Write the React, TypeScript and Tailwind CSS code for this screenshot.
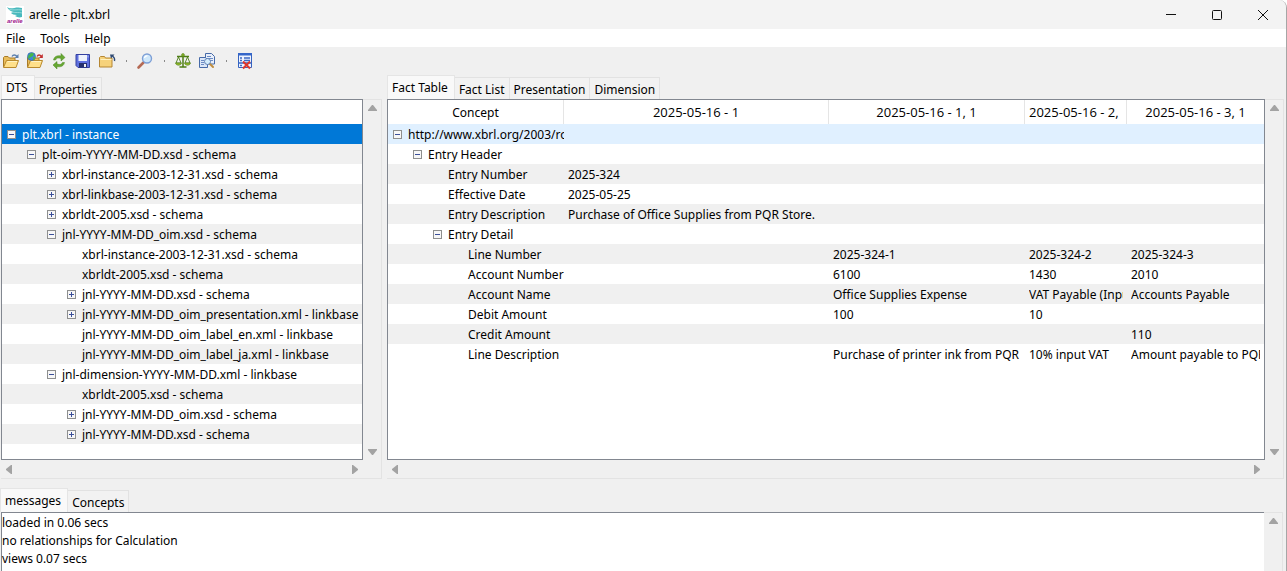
import { Fragment, useState, type ReactNode } from "react";

type Expander = "open" | "closed" | "none";
type TreeItem = { level: number; state: Expander; label: string };
type FactRow = { level: number; state: Expander; label: string; values?: string[] };

const dtsItems: TreeItem[] = [
  { level: 0, state: "open", label: "plt.xbrl - instance" },
  { level: 1, state: "open", label: "plt-oim-YYYY-MM-DD.xsd - schema" },
  { level: 2, state: "closed", label: "xbrl-instance-2003-12-31.xsd - schema" },
  { level: 2, state: "closed", label: "xbrl-linkbase-2003-12-31.xsd - schema" },
  { level: 2, state: "closed", label: "xbrldt-2005.xsd - schema" },
  { level: 2, state: "open", label: "jnl-YYYY-MM-DD_oim.xsd - schema" },
  { level: 3, state: "none", label: "xbrl-instance-2003-12-31.xsd - schema" },
  { level: 3, state: "none", label: "xbrldt-2005.xsd - schema" },
  { level: 3, state: "closed", label: "jnl-YYYY-MM-DD.xsd - schema" },
  { level: 3, state: "closed", label: "jnl-YYYY-MM-DD_oim_presentation.xml - linkbase" },
  { level: 3, state: "none", label: "jnl-YYYY-MM-DD_oim_label_en.xml - linkbase" },
  { level: 3, state: "none", label: "jnl-YYYY-MM-DD_oim_label_ja.xml - linkbase" },
  { level: 2, state: "open", label: "jnl-dimension-YYYY-MM-DD.xml - linkbase" },
  { level: 3, state: "none", label: "xbrldt-2005.xsd - schema" },
  { level: 3, state: "closed", label: "jnl-YYYY-MM-DD_oim.xsd - schema" },
  { level: 3, state: "closed", label: "jnl-YYYY-MM-DD.xsd - schema" },
];

const factColumns = ["2025-05-16 - 1", "2025-05-16 - 1, 1", "2025-05-16 - 2, 1", "2025-05-16 - 3, 1"];

const factRows: FactRow[] = [
  { level: 0, state: "open", label: "http://www.xbrl.org/2003/role" },
  { level: 1, state: "open", label: "Entry Header" },
  { level: 2, state: "none", label: "Entry Number", values: ["2025-324"] },
  { level: 2, state: "none", label: "Effective Date", values: ["2025-05-25"] },
  { level: 2, state: "none", label: "Entry Description", values: ["Purchase of Office Supplies from PQR Store."] },
  { level: 2, state: "open", label: "Entry Detail" },
  { level: 3, state: "none", label: "Line Number", values: ["", "2025-324-1", "2025-324-2", "2025-324-3"] },
  { level: 3, state: "none", label: "Account Number", values: ["", "6100", "1430", "2010"] },
  { level: 3, state: "none", label: "Account Name", values: ["", "Office Supplies Expense", "VAT Payable (Input)", "Accounts Payable"] },
  { level: 3, state: "none", label: "Debit Amount", values: ["", "100", "10"] },
  { level: 3, state: "none", label: "Credit Amount", values: ["", "", "", "110"] },
  { level: 3, state: "none", label: "Line Description", values: ["", "Purchase of printer ink from PQR", "10% input VAT", "Amount payable to PQR"] },
];

const messages = ["loaded in 0.06 secs", "no relationships for Calculation", "views 0.07 secs"];

const indents = ["pl-[5px]", "pl-[25px]", "pl-[45px]", "pl-[65px]"];

function ExpanderBox({ state }: { state: Expander }) {
  if (state === "none") return <span className="w-[15px] shrink-0" />;
  return (
    <svg viewBox="0 0 9 9" className="mr-1.5 size-[9px] shrink-0" shapeRendering="crispEdges" aria-hidden="true">
      <rect x="0.5" y="0.5" width="8" height="8" fill="#f7f7f7" stroke="#8e8f8f" />
      <path d="M2 4.5h5" stroke="#3b4f9a" />
      {state === "closed" && <path d="M4.5 2v5" stroke="#3b4f9a" />}
    </svg>
  );
}

function Tabs({ label, names }: { label: string; names: string[] }) {
  const [active, setActive] = useState(names[0]);
  return (
    <div role="tablist" aria-label={label} className="flex h-6 items-end">
      {names.map((name) => (
        <button
          key={name}
          role="tab"
          aria-selected={name === active}
          onClick={() => setActive(name)}
          className={
            name === active
              ? "h-6 border border-b-0 border-[#e5e5e5] bg-[#f9f9f9] pr-1.5 pl-1"
              : "h-[22px] border border-b-0 border-l-0 border-[#e2e2e2] bg-[#f2f2f2] px-1 pt-0.5"
          }
        >
          {name}
        </button>
      ))}
    </div>
  );
}

const arrowPaths = {
  up: "M4 0h1l4 5v1H0V5z",
  down: "M0 0h9v1L5 6H4L0 1z",
  left: "M7 0v9H6L1 5V4l5-4z",
  right: "M1 0h1l5 4v1L2 9H1z",
};

function Arrow({ dir }: { dir: "up" | "down" | "left" | "right" }) {
  return (
    <button aria-label={"Scroll " + dir} className="flex size-4 items-center justify-center">
      <svg viewBox={dir === "up" || dir === "down" ? "0 0 9 6" : "0 0 8 9"} className={dir === "up" || dir === "down" ? "h-1.5 w-[9px]" : "h-[9px] w-2"} aria-hidden="true">
        <path d={arrowPaths[dir]} fill="#a3a3a3" />
      </svg>
    </button>
  );
}

/* A bordered view with its two scroll bars along the right and bottom edges. */
function ScrollView({ children }: { children: ReactNode }) {
  return (
    <div className="grid flex-1 grid-cols-[minmax(0,1fr)_18px] grid-rows-[1fr_18px] border-r border-b border-[#e3e3e3]">
      <div className="overflow-hidden border border-[#828790] bg-white pb-[15px]">{children}</div>
      <div className="flex flex-col items-center justify-between border-t border-[#e3e3e3]">
        <Arrow dir="up" />
        <Arrow dir="down" />
      </div>
      <div className="flex items-center justify-between">
        <Arrow dir="left" />
        <Arrow dir="right" />
      </div>
    </div>
  );
}

function Folder() {
  return (
    <>
      <path d="M.5 14V4.500l1-1h3.500l1.500 1.500h5.500v3" fill="#e9bd5b" stroke="#a87a26" />
      <path d="M.500 14.500 3.500 7.500h12L13 14.500z" fill="#ffe08a" stroke="#b98a2e" />
      <path d="M4.500 8.500h9.500" stroke="#fff3c4" />
    </>
  );
}

const icons: Record<string, ReactNode> = {
  "Open file": (
    <>
      <Folder />
      <path d="M9 3.500c1-2 3.500-2 5 0" fill="none" stroke="#5b7fae" strokeWidth="1.300" />
      <path d="M15.500 1v4h-4z" fill="#5b7fae" />
    </>
  ),
  "Open from web": (
    <>
      <Folder />
      <circle cx="4.500" cy="3.500" r="4" fill="#3f86d8" stroke="#2d5f9f" strokeWidth="0.600" />
      <path d="M1 3 4 0l3 .5L6 3l-2 1L1.500 6zM6 4l2-.5L8 6 6 7z" fill="#45b749" />
      <path d="M10 3.500c1-2 3-2 4.500 0" fill="none" stroke="#c22f2f" strokeWidth="1.300" />
      <path d="M15.800 1v4h-4z" fill="#c22f2f" />
    </>
  ),
  Reload: (
    <>
      <path d="M2.500 7c.5-3.500 4-5 7.500-4V.5L14 4.500 10 8V5.500C7 4.500 5.500 5 4.500 7z" fill="#67a833" stroke="#4a8720" strokeWidth="0.500" />
      <path d="M13.500 9.500c-.5 3.500-4 5-7.500 4V16l-4-4 4-3.500V11c3 1 4.500.5 5.500-1.500z" fill="#67a833" stroke="#4a8720" strokeWidth="0.500" />
    </>
  ),
  Save: (
    <>
      <path d="M1 1.500h13.500v13H3l-2-2z" fill="#5f70de" stroke="#3440a0" />
      <path d="M3.500 2h8.500v6H3.500z" fill="#eef2fc" />
      <path d="M4 10h8v4.500H4z" fill="#26306e" />
      <path d="M9 11h2v3H9z" fill="#f0f0f0" />
      <path d="M12.500 2.500h1v2h-1z" fill="#a9b6f5" />
    </>
  ),
  "Save as": (
    <>
      <path d="M.5 14V4.500l1-1h4l1 1.500h6.500v9z" fill="#f6d27b" stroke="#b58633" />
      <path d="M1.500 6.500h11" stroke="#fff0bd" />
      <path d="M15.500 8c.5-2 0-3.500-2-5" fill="none" stroke="#2f4a73" strokeWidth="1.300" />
      <path d="M11 1.500h4.500L12 5.500z" fill="#2f4a73" />
    </>
  ),
  Find: (
    <>
      <path d="m1.500 14.500 5-5" stroke="#b56a54" strokeWidth="2.600" strokeLinecap="round" />
      <circle cx="10" cy="5.500" r="4.500" fill="#cfe8fb" stroke="#7d9fd6" strokeWidth="1.400" />
      <path d="M7.500 5c.3-1.500 1.500-2.300 3-2.200" fill="none" stroke="#fff" strokeWidth="1.200" />
    </>
  ),
  Validate: (
    <>
      <path d="M8 2v11.500M2 3.500h12M4.500 14h7" stroke="#4d7d16" strokeWidth="1.500" />
      <circle cx="8" cy="2" r="1.400" fill="#8db528" stroke="#4d7d16" strokeWidth="0.600" />
      <path d="M3.500 4 1 10h5zM12.500 4 10 10h5z" fill="none" stroke="#4d7d16" strokeWidth="0.900" />
      <path d="M.5 10h6c-.5 3-5.500 3-6 0zM9.500 10h6c-.5 3-5.500 3-6 0z" fill="#95bb2b" stroke="#4d7d16" strokeWidth="0.600" />
    </>
  ),
  "Compare DTS": (
    <>
      <path d="M6.500.5h6l3 3V11h-9z" fill="#e9effa" stroke="#466aa8" />
      <path d="M8 3.500h4M8 5.500h6M11 7.500h3" stroke="#6c8cc4" />
      <path d="M.5 4.500h6l2 2v8h-8z" fill="#dce7f8" stroke="#466aa8" />
      <path d="M2 7.500h3M2 9.500h3M2 11.500h3" stroke="#6c8cc4" />
      <path d="m11 11 3 3" stroke="#c08d3e" strokeWidth="2" strokeLinecap="round" />
      <circle cx="8.500" cy="8.500" r="3" fill="#d5edfc" stroke="#5e80b5" />
    </>
  ),
  "Close table": (
    <>
      <path d="M1.500.5h13v14h-13z" fill="#eef3ff" stroke="#3563bf" />
      <path d="M1 0h14v2.500H1z" fill="#3566c9" />
      <path d="M3 5h2M7 5h6M3 7.500h2M7 7.500h6M3 12.500h2" stroke="#3e6ac4" strokeWidth="1.300" />
      <path d="M1 10h14" stroke="#3566c9" strokeWidth="1.500" />
      <path d="m6 8.500 7 7M13 8.500l-7 7" stroke="#e0372a" strokeWidth="2" />
    </>
  ),
};

const toolGroups = [["Open file", "Open from web", "Reload", "Save", "Save as"], ["Find"], ["Validate", "Compare DTS"], ["Close table"]];

export default function App() {
  return (
    <div className="flex min-h-screen flex-col overflow-hidden rounded-tr-lg border-r border-[#a6a6a6] bg-[#f0f0f0] font-['Noto_Sans','Open_Sans',sans-serif] text-xs text-black">
      <header className="flex h-[29px] items-center bg-[#f3f3f3] pl-1.5">
        <svg viewBox="0 0 18 18" className="mr-[5px] size-[18px]" aria-hidden="true">
          <path d="M0 0h18v18H0z" fill="#fff" />
          <path d="M1 1c4 3 9-1 15 1v9c-3 1-5 0-7-1l2-1c-3 0-5-1-6-2l2-1C4 5 2 3 1 1z" fill="#49b9bd" />
          <path d="M3 3c4 2 8 0 13 1M6 6c4 1 7 0 10 1" stroke="#a5dfe0" strokeWidth="0.800" fill="none" />
          <text x="1" y="17" fontSize="6" fontWeight="700" fontStyle="italic" fill="#a0188c" fontFamily="Liberation Sans">arelle</text>
        </svg>
        <h1>arelle - plt.xbrl</h1>
        <div className="ml-auto flex">
          <button aria-label="Minimize" className="flex h-7 w-[46px] items-center justify-center">
            <svg viewBox="0 0 10 10" className="size-2.5"><path d="M0 4.500h10" stroke="#111" /></svg>
          </button>
          <button aria-label="Maximize" className="flex h-7 w-[46px] items-center justify-center">
            <svg viewBox="0 0 10 10" className="size-2.5"><rect x="0.500" y="0.500" width="9" height="9" rx="1" fill="none" stroke="#111" /></svg>
          </button>
          <button aria-label="Close" className="flex h-7 w-[46px] items-center justify-center">
            <svg viewBox="0 0 10 10" className="size-2.5"><path d="m0 0 10 10M10 0 0 10" stroke="#111" /></svg>
          </button>
        </div>
      </header>

      <nav aria-label="Menu" className="flex h-[18px] items-center gap-[15px] bg-white px-1.5 pt-0.5">
        <button>File</button>
        <button>Tools</button>
        <button>Help</button>
      </nav>

      <div role="toolbar" aria-label="Tools" className="flex h-7 items-center gap-0.5">
        {toolGroups.map((group, i) => (
          <Fragment key={i}>
            {i > 0 && (
              <span className="flex w-3 justify-center">
                <span className="h-0.5 w-px bg-[#8a8a8a]" />
              </span>
            )}
            {group.map((name) => (
              <button key={name} aria-label={name} title={name} className="flex h-6 w-[22px] items-center justify-center">
                <svg viewBox="0 0 16 16" className="size-4 overflow-visible">{icons[name]}</svg>
              </button>
            ))}
          </Fragment>
        ))}
      </div>

      <main className="flex gap-[5px] pr-0.5">
        <section aria-label="DTS" className="flex w-[382px] shrink-0 flex-col pl-px">
          <Tabs label="DTS views" names={["DTS", "Properties"]} />
          <ScrollView>
            <div className="h-6" />
            <ul role="tree" aria-label="DTS">
              {dtsItems.map((item, i) => (
                <li
                  key={i}
                  role="treeitem"
                  aria-level={item.level + 1}
                  aria-selected={i === 0}
                  className={
                    "flex h-5 items-center whitespace-nowrap " +
                    indents[item.level] +
                    (i === 0 ? " bg-[#0078d7] text-white" : i % 2 === 1 ? " bg-[#f0f0f0]" : "")
                  }
                >
                  <ExpanderBox state={item.state} />
                  <span className="pt-0.5">{item.label}</span>
                </li>
              ))}
            </ul>
          </ScrollView>
        </section>

        <section aria-label="Fact Table" className="flex min-w-0 flex-1 flex-col">
          <Tabs label="Fact views" names={["Fact Table", "Fact List", "Presentation", "Dimension"]} />
          <ScrollView>
            <table className="w-full table-fixed border-separate border-spacing-0">
              <colgroup>
                <col className="w-[176px]" />
                <col />
                <col className="w-[196px]" />
                <col className="w-[102px]" />
                <col className="w-[137px]" />
              </colgroup>
              <thead>
                <tr className="h-6">
                  <th className="border-r border-[#e5e5e5] p-0 pt-0.5 font-normal">Concept</th>
                  {factColumns.map((name) => (
                    <th key={name} className="border-r border-[#e5e5e5] p-0 px-1 font-['Open_Sans','Noto_Sans',sans-serif] text-[13px] leading-4 font-normal whitespace-nowrap last:border-r-0">
                      <div className="overflow-hidden">{name}</div>
                    </th>
                  ))}
                </tr>
              </thead>
              <tbody>
                {factRows.map((row, i) => (
                  <tr key={row.label} className={i === 0 ? "h-5 bg-[#e0f0ff]" : i % 2 === 0 ? "h-5 bg-[#f0f0f0]" : "h-5"}>
                    <th scope="row" className="p-0 text-left font-normal">
                      <div className={"flex h-5 items-center overflow-hidden whitespace-nowrap " + indents[row.level]}>
                        <ExpanderBox state={row.state} />
                        <span className="pt-0.5">{row.label}</span>
                      </div>
                    </th>
                    {factColumns.map((name, c) => (
                      <td key={name} className="p-0 px-1">
                        <div className="overflow-hidden pt-0.5 whitespace-nowrap">{row.values?.[c]}</div>
                      </td>
                    ))}
                  </tr>
                ))}
              </tbody>
            </table>
          </ScrollView>
        </section>
      </main>

      <section aria-label="Messages" className="mt-[9px] flex flex-1 flex-col pr-[3px]">
        <Tabs label="Message views" names={["messages", "Concepts"]} />
        <div className="flex flex-1 pl-px">
          <div role="log" className="flex-1 border-t border-l border-[#828790] bg-white pt-px">
            {messages.map((text) => (
              <p key={text} className="h-[18px] leading-[18px]">{text}</p>
            ))}
          </div>
          <div className="flex w-[19px] justify-center border-t border-r border-[#e3e3e3]">
            <Arrow dir="up" />
          </div>
        </div>
      </section>
    </div>
  );
}
